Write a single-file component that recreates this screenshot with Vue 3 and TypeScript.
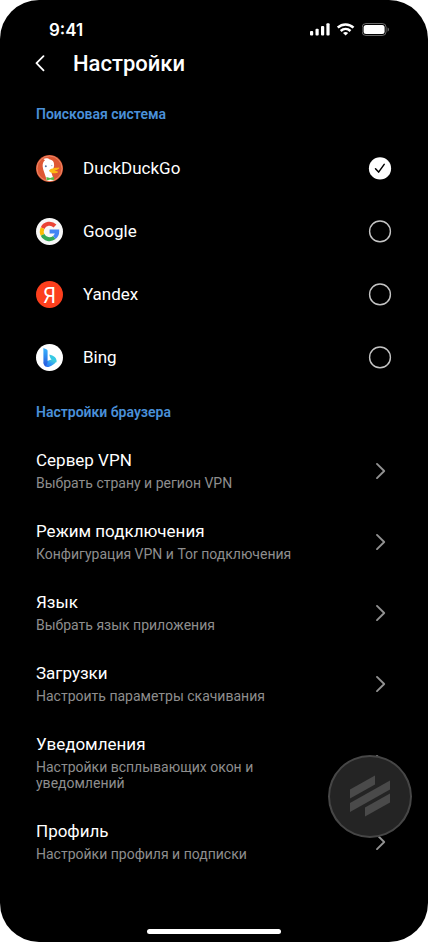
<script setup lang="ts">
import { ref } from 'vue'

type EngineId = 'duckduckgo' | 'google' | 'yandex' | 'bing'

interface Engine {
  id: EngineId
  name: string
}

interface Setting {
  title: string
  description: string
}

const engines: Engine[] = [
  { id: 'duckduckgo', name: 'DuckDuckGo' },
  { id: 'google', name: 'Google' },
  { id: 'yandex', name: 'Yandex' },
  { id: 'bing', name: 'Bing' },
]

const settings: Setting[] = [
  { title: 'Сервер VPN', description: 'Выбрать страну и регион VPN' },
  { title: 'Режим подключения', description: 'Конфигурация VPN и Tor подключения' },
  { title: 'Язык', description: 'Выбрать язык приложения' },
  { title: 'Загрузки', description: 'Настроить параметры скачивания' },
  { title: 'Уведомления', description: 'Настройки всплывающих окон и уведомлений' },
  { title: 'Профиль', description: 'Настройки профиля и подписки' },
]

const selected = ref<EngineId>('duckduckgo')
</script>

<template>
  <main class="screen">
    <div class="status">
      <span class="time">9:41</span>
      <div class="indicators">
        <svg class="signal" width="20" height="13" viewBox="0 0 20 13" fill="#fff">
          <rect x="0" y="8" width="3.2" height="4.6" rx="1" />
          <rect x="5.5" y="5.8" width="3.2" height="6.8" rx="1" />
          <rect x="11" y="3" width="3.2" height="9.6" rx="1" />
          <rect x="16.4" y="0.3" width="3.2" height="12.3" rx="1" />
        </svg>
        <svg class="wifi" width="18" height="13" viewBox="0 0 18 13" fill="none" stroke="#fff" stroke-width="2.5">
          <path d="M.7 4.6C5.200 .3 12 .3 16.500 4.600" />
          <path d="M3.700 8C6.600 5.300 10.600 5.300 13.500 8" />
          <path d="M8.600 12.500L6 10C7.500 8.700 9.700 8.700 11.200 10Z" fill="#fff" stroke="none" />
        </svg>
        <svg class="battery" width="28" height="13" viewBox="0.4 0 28 13">
          <rect x=".5" y=".5" width="24" height="12" rx="3.8" fill="none" stroke="#fff" stroke-opacity=".4" />
          <rect x="2" y="2" width="21" height="9" rx="2.5" fill="#fff" />
          <path d="M26 4.500V8.700C26.800 8.300 27.300 7.500 27.300 6.600S26.800 4.900 26 4.500Z" fill="#fff" fill-opacity=".45" />
        </svg>
      </div>
    </div>

    <header class="header">
      <svg class="back" width="10" height="18" viewBox="0 0 10 18" fill="none" stroke="#fff" stroke-width="1.8" stroke-linecap="round" stroke-linejoin="round">
        <path d="M8.500 1.100L1.500 8.200L8.500 15.300" />
      </svg>
      <h1>Настройки</h1>
    </header>

    <h2 class="section">Поисковая система</h2>
    <ul class="engines">
      <li v-for="engine in engines" :key="engine.id" class="engine" @click="selected = engine.id">
        <svg v-if="engine.id === 'duckduckgo'" class="logo" viewBox="0 0 27 27">
          <circle cx="13.500" cy="13.500" r="13.500" fill="#de5833" />
          <circle cx="13.500" cy="13.500" r="12.500" fill="none" stroke="#ee9b80" stroke-width=".7" />
          <path d="M10.800 25.600C9.600 20 7 15.500 6.700 11.700C6.400 8.500 7.400 6.300 9 5.200L7.400 4C9.800 2.700 12.300 3.200 13.800 4.500C17 4.800 18.300 7.400 18.100 10.700L17 15.500L15.500 18L18 25.300C15.800 26.300 13 26.300 10.800 25.600Z" fill="#fff" />
          <path d="M13 15.700C14 13.300 18.500 13 23 12.500C24 13.400 21.800 14.900 18.600 15.500C20 16.200 22.200 16.100 22 17.200C20.500 18.900 14.700 18.900 13 15.700Z" fill="#fdb914" />
          <path d="M10.400 22L14.100 22.900L18 21.700V25.200L14.200 24.500L10.600 25.600Z" fill="#58b947" />
          <circle cx="9.800" cy="11.300" r="1" fill="#56739f" />
          <circle cx="15.800" cy="10.600" r=".6" fill="#8499b8" />
        </svg>
        <svg v-else-if="engine.id === 'google'" class="logo" viewBox="0 0 27 27" fill="none" stroke-width="4">
          <circle cx="13.500" cy="13.500" r="13.500" fill="#f7f7f7" />
          <path d="M19 8A7.700 7.700 0 0 0 6.600 10.100" stroke="#ea4335" />
          <path d="M6.600 10.100A7.700 7.700 0 0 0 6.600 16.900" stroke="#fbbc05" />
          <path d="M6.600 16.900A7.700 7.700 0 0 0 18.300 19.500" stroke="#34a853" />
          <path d="M13.600 13.600H21.200C21.200 16 20.100 18.100 18.300 19.500" stroke="#4285f4" />
        </svg>
        <svg v-else-if="engine.id === 'yandex'" class="logo" viewBox="0 0 27 27">
          <circle cx="13.500" cy="13.500" r="13.500" fill="#fc3f1d" />
          <text x="6.900" y="21.500" class="ya" textLength="13" lengthAdjust="spacingAndGlyphs">Я</text>
        </svg>
        <svg v-else class="logo" viewBox="0 0 27 27">
          <defs>
            <linearGradient id="stem" x1="0" y1="0" x2="0" y2="1">
              <stop offset="0" stop-color="#38b6ff" />
              <stop offset="1" stop-color="#2857dc" />
            </linearGradient>
            <linearGradient id="bowl" x1="0" y1="1" x2="1" y2="0">
              <stop offset="0" stop-color="#2b5ff0" />
              <stop offset=".5" stop-color="#2f9df5" />
              <stop offset="1" stop-color="#50e6c2" />
            </linearGradient>
          </defs>
          <circle cx="13.500" cy="13.500" r="13.500" fill="#fff" />
          <path d="M7.700 18.300L16 15.300L20.300 16.500C20.800 19.400 13.500 23.400 11 23.100C9 22.900 7.700 21 7.700 18.300Z" fill="url(#bowl)" />
          <path d="M7.400 4L10.800 5.600Q11.600 6 11.600 7V18.500L9.800 22.400C8.300 21.700 7.400 20.300 7.400 18.500Z" fill="url(#stem)" />
          <path d="M13.300 10.400C17.500 11.500 21.300 13.300 20.500 18.500C19.500 16.800 16.500 16.200 15.300 15.400C14.400 14 13.600 12.400 13.300 10.400Z" fill="#36c9e4" />
        </svg>
        <span class="engine-name">{{ engine.name }}</span>
        <svg class="radio" width="24" height="25" viewBox="0 0 24 25" fill="none">
          <template v-if="selected === engine.id">
            <circle cx="12" cy="12.400" r="11.100" fill="#fff" />
            <path d="M7.500 12.700L10.600 16.100L16.200 8.400" stroke="#000" stroke-width="1.500" stroke-linecap="round" stroke-linejoin="round" />
          </template>
          <circle v-else cx="12" cy="12.400" r="10.400" stroke="#c4c4c4" stroke-width="1.400" />
        </svg>
      </li>
    </ul>

    <h2 class="section browser">Настройки браузера</h2>
    <ul class="settings">
      <li v-for="item in settings" :key="item.title" class="setting">
        <div class="copy">
          <h3>{{ item.title }}</h3>
          <p>{{ item.description }}</p>
        </div>
        <svg class="chevron" width="12" height="18" viewBox="0 0 12 18" fill="none" stroke="#929292" stroke-width="1.900" stroke-linecap="round" stroke-linejoin="round">
          <path d="M2 1.900L9.200 9L2 16.100" />
        </svg>
      </li>
    </ul>

    <button class="fab" type="button">
      <svg width="80" height="79" viewBox="2 2 80 79" fill="#4a4a4a">
        <path d="M22 34.500L47 20.500V29.500L22 43.500Z" />
        <path d="M22 48L62 25.500V34.500L22 57Z" />
        <path d="M37 52.500L62 38.500V47.500L37 61.500Z" />
      </svg>
    </button>
    <div class="home-bar"></div>
  </main>
</template>

<style>
body {
  background: #fff;
}
</style>

<style scoped>
.screen {
  position: relative;
  box-sizing: border-box;
  width: 428px;
  height: 942px;
  overflow: hidden;
  padding: 20px 36px 0;
  border-radius: 39px;
  background: #000;
  color: #fff;
  font-family: Roboto, "Noto Sans", sans-serif;
}

h1,
h2,
h3,
p,
ul {
  margin: 0;
  padding: 0;
  font-weight: 400;
  list-style: none;
}

svg {
  display: block;
  flex: none;
}

.status {
  display: flex;
  align-items: center;
  justify-content: space-between;
  height: 20px;
  padding: 0 2px 0 13px;
}

.time {
  font: 600 17px/20px Inter, sans-serif;
}

.indicators {
  display: flex;
  gap: 7px;
  margin-top: -1px;
}

.header {
  display: flex;
  align-items: center;
  gap: 28px;
  height: 26px;
  margin-top: 11px;
  margin-left: -1px;
}

h1 {
  font-size: 22px;
  font-weight: 500;
  line-height: 26px;
}

.section {
  margin-top: 29px;
  color: #4a90d9;
  font-size: 14px;
  font-weight: 600;
  line-height: 16px;
}

.engines {
  display: grid;
  gap: 36px;
  margin-top: 33px;
}

.engine {
  display: flex;
  align-items: center;
  height: 27px;
}

.logo {
  width: 27px;
  height: 27px;
}

.ya {
  fill: #fff;
  font: 400 22.500px Roboto, sans-serif;
}

.engine-name {
  flex: 1;
  margin-left: 20px;
  font-size: 17px;
  line-height: 19px;
}

.section.browser {
  margin-top: 33px;
}

.settings {
  display: grid;
  gap: 30px;
  margin-top: 30px;
}

.setting {
  display: flex;
  align-items: center;
  justify-content: space-between;
  padding-right: 5px;
}

.copy {
  width: 265px;
}

h3 {
  font-size: 17px;
  line-height: 20px;
}

p {
  margin-top: 5px;
  color: #8e8e8e;
  font-size: 14px;
  line-height: 16px;
}

.fab {
  position: absolute;
  right: 16px;
  bottom: 104px;
  box-sizing: border-box;
  display: grid;
  place-items: center;
  width: 84px;
  height: 83px;
  padding: 0;
  border: 2px solid #464646;
  border-radius: 50%;
  background: #242424;
}

.home-bar {
  position: absolute;
  bottom: 8px;
  left: 147px;
  width: 134px;
  height: 5px;
  border-radius: 3px;
  background: #fff;
}
</style>
